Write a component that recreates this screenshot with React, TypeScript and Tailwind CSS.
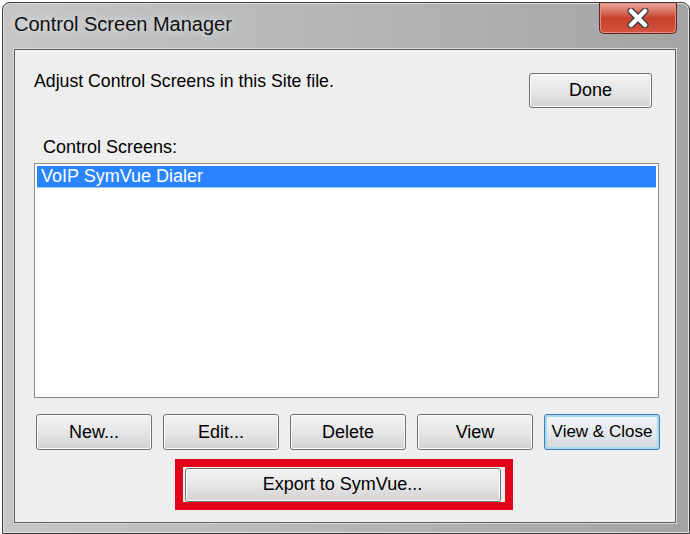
const buttonClass =
  "h-[36px] w-[116px] rounded-[3px] border border-[#707070] bg-gradient-to-b from-[#f4f4f4] via-[#e6e6e6] to-[#d2d2d2] text-[18px] text-black shadow-[inset_0_0_0_1px_#fcfcfc]";

function CloseButton() {
  return (
    <div className="mr-[12px] flex h-[31px] w-[78px] items-center justify-center rounded-b-[5px] border border-t-0 border-[#5a2a22] bg-gradient-to-b from-[#e8a89c] via-[#c6412c] to-[#d4553f] shadow-[inset_0_0_0_1px_#e88b7c]">
      <svg width="26" height="20" viewBox="0 0 26 20">
        <path
          d="M6 3 L20 17 M20 3 L6 17"
          stroke="#3a3a3a"
          strokeWidth="7"
          strokeLinecap="round"
        />
        <path
          d="M6 3 L20 17 M20 3 L6 17"
          stroke="#ffffff"
          strokeWidth="4.5"
          strokeLinecap="round"
        />
      </svg>
    </div>
  );
}

export default function App() {
  const buttons = ["New...", "Edit...", "Delete", "View"];

  return (
    <div className="h-[534px] w-[690px] overflow-hidden bg-white font-['Liberation_Sans',Arial,sans-serif]">
      <div className="ml-[2px] mt-[2px] flex h-[532px] w-[688px] flex-col rounded-t-[8px] border border-[#3a3a3a] bg-gradient-to-r from-[#c4c6c7] via-[#b4b5b6] to-[#a3a4a5] shadow-[inset_0_0_0_1px_#e0e0e0]">
        {/* title bar */}
        <div className="flex h-[46px] items-start justify-between">
          <div className="pl-[11px] pt-[9px] text-[20px] leading-[24px] text-[#111] [text-shadow:0_0_8px_#f4f4f4]">
            Control Screen Manager
          </div>
          <CloseButton />
        </div>

        {/* client area */}
        <div className="mb-[10px] ml-[11px] mr-[13px] flex flex-1 flex-col border border-[#5f5f5f] bg-[#eeeeee] shadow-[0_0_0_1px_#d8d8d8]">
          <div className="flex items-start justify-between pl-[19px] pr-[23px] pt-[21px]">
            <div className="text-[17.7px] leading-[20px] text-black">
              Adjust Control Screens in this Site file.
            </div>
            <button className="mt-[2px] h-[35px] w-[123px] rounded-[3px] border border-[#707070] bg-gradient-to-b from-[#f4f4f4] via-[#e6e6e6] to-[#d2d2d2] text-[18px] text-black shadow-[inset_0_0_0_1px_#fcfcfc]">
              Done
            </button>
          </div>

          <div className="mt-[29px] pl-[28px] text-[18px] leading-[20px] text-black">
            Control Screens:
          </div>

          <div className="ml-[19px] mr-[16px] mt-[6px] h-[235px] border border-[#8a8d92] bg-white p-[2px]">
            <div className="flex h-[22px] items-center border-b border-[#9cc6ff] bg-[#2b84ff] pl-[4px] text-[18px] text-white">
              VoIP SymVue Dialer
            </div>
          </div>

          <div className="ml-[21px] mt-[16px] flex gap-[11px]">
            {buttons.map((label) => (
              <button key={label} className={buttonClass}>
                {label}
              </button>
            ))}
            <button className="h-[36px] w-[116px] rounded-[3px] border border-[#3c7fb1] bg-gradient-to-b from-[#f2f6f9] via-[#e4e9ec] to-[#d3d8db] text-[17px] text-black shadow-[inset_0_0_0_2px_#a8d8f4]">
              View &amp; Close
            </button>
          </div>

          <div className="mt-[9px] flex justify-center pr-[3px]">
            <div className="flex h-[51px] w-[338px] items-center border-[8px] border-[#e2001a] pl-[2px] pr-[4px]">
              <button className="h-[34px] w-full rounded-[3px] border border-[#707070] bg-gradient-to-b from-[#f4f4f4] via-[#e6e6e6] to-[#d2d2d2] text-[18px] text-black shadow-[inset_0_0_0_1px_#fcfcfc]">
                Export to SymVue...
              </button>
            </div>
          </div>
        </div>
      </div>
    </div>
  );
}
